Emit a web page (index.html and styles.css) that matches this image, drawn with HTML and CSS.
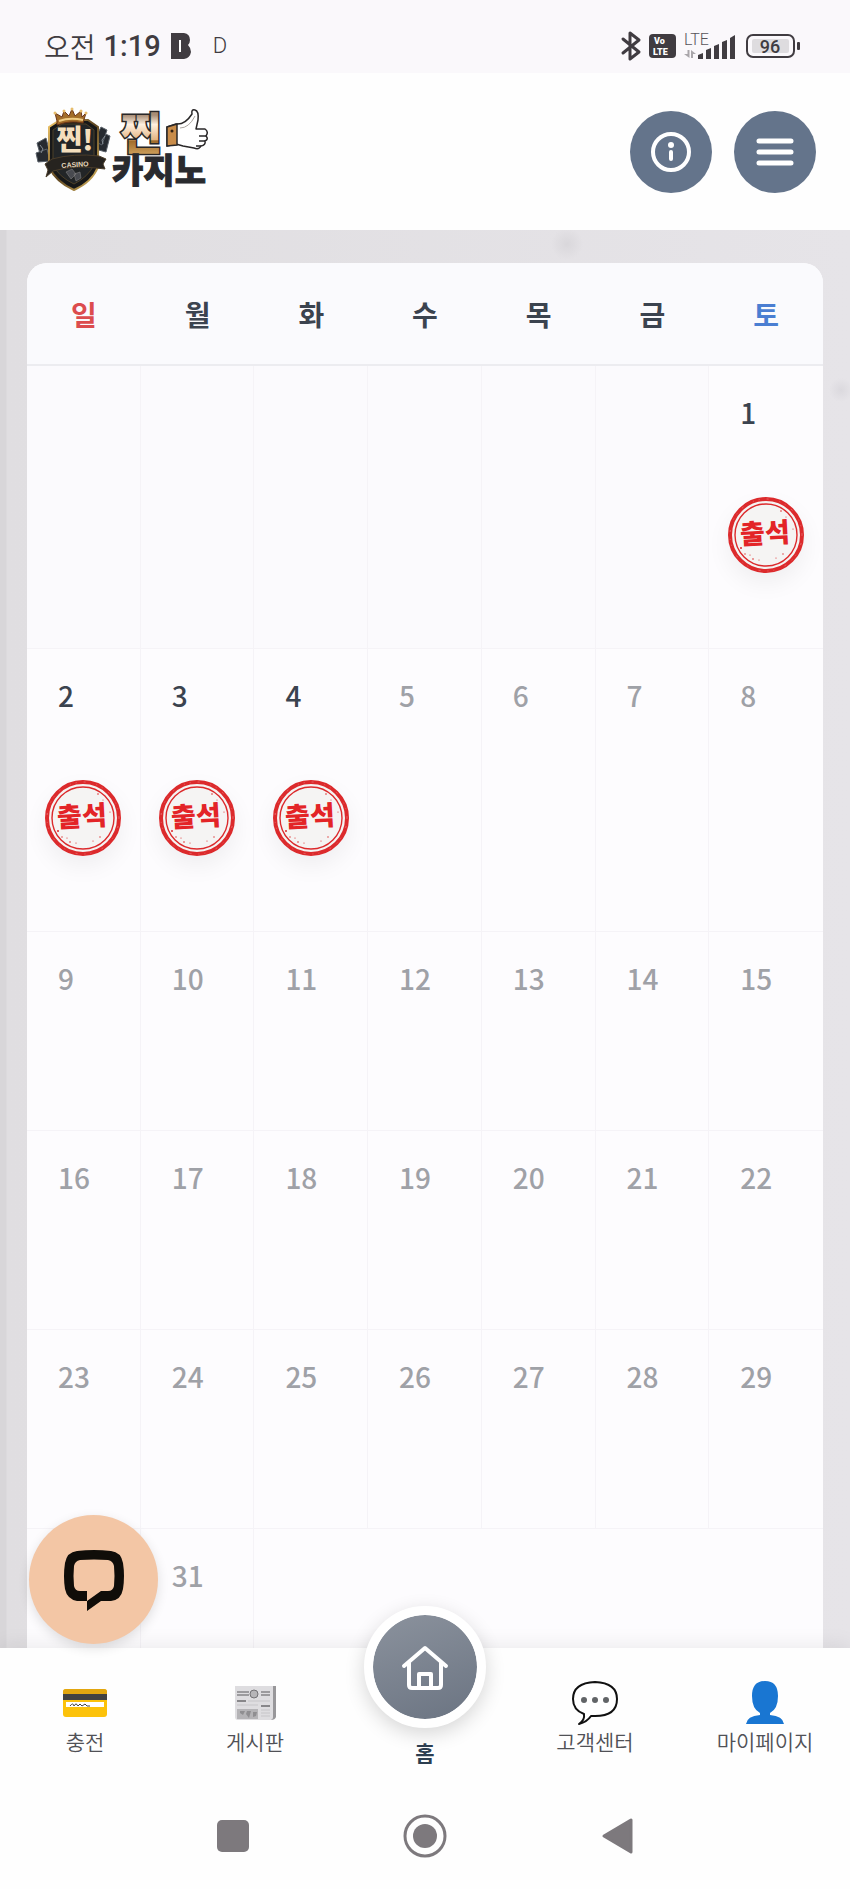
FILE: index.html
```html
<!DOCTYPE html>
<html lang="ko">

<head>
  <meta charset="UTF-8">
  <meta name="viewport" content="width=device-width, initial-scale=1.0">
  <title>찐카지노 - 출석체크</title>
  <link rel="stylesheet" href="styles.css">
</head>

<body>
  <!-- shared stamp drawing -->
  <svg class="defs" width="0" height="0" aria-hidden="true">
    <symbol id="stamp" viewBox="0 0 76 76">
      <circle cx="38" cy="38" r="36" fill="#f5f4f3" stroke="#dc2a2c" stroke-width="4" />
      <circle cx="38" cy="38" r="31" fill="none" stroke="#dc2a2c" stroke-width="1.4" />
      <circle cx="38" cy="38" r="36" fill="none" stroke="#e8686a" stroke-width="1" stroke-dasharray="1 7 2 11 1 5" />
      <g fill="#dc2a2c">
        <circle cx="13" cy="51" r="1" />
        <circle cx="17" cy="57" r=".7" />
        <circle cx="22" cy="58" r=".6" />
        <circle cx="25" cy="62" r=".8" />
        <circle cx="31" cy="63" r=".6" />
        <circle cx="48" cy="61" r=".6" />
        <circle cx="55" cy="57" r=".7" />
        <circle cx="53" cy="14" r=".8" />
        <circle cx="58" cy="20" r=".5" />
        <circle cx="65" cy="32" r=".6" />
      </g>
      <text x="37" y="46" text-anchor="middle" transform="rotate(-3 38 38)" class="stamp-text">출석</text>
    </symbol>
  </svg>

  <div class="app">
    <div class="status-bar">
      <div class="status-left">
        <span class="ampm">오전</span>
        <span class="clock">1:19</span>
        <svg class="status-b" width="20" height="26" viewBox="0 0 20 26">
          <path d="M0 0H13Q19 1 19 7Q19 10 17 12Q20 15 20 19Q19 25 13 26H0Z" fill="#403c41" />
          <path d="M9 7V19" stroke="#fff" stroke-width="2" />
        </svg>
        <span class="carrier">D</span>
      </div>
      <div class="status-right">
        <svg width="20" height="30" viewBox="0 0 20 30" fill="none" stroke="#403c41" stroke-width="3" stroke-linejoin="round" stroke-linecap="round">
          <path d="M2 8L18 21L9 28V2L18 9L2 22" />
        </svg>
        <svg width="27" height="24" viewBox="0 0 27 24">
          <rect width="27" height="24" rx="4" fill="#403c41" />
          <text x="5" y="10" class="volte">Vo</text>
          <text x="4" y="21" class="volte">LTE</text>
        </svg>
        <svg width="54" height="36" viewBox="0 0 54 36">
          <text x="0" y="17" class="lte">LTE</text>
          <g fill="#a9a6aa">
            <path d="M3.500 22H5.500V30L0 26H3.500Z" />
            <path d="M7 30V22L12 26H9V30Z" />
          </g>
          <g fill="#403c41">
            <path d="M14 27L19 25V31H14Z" />
            <path d="M22 22L27 20V31H22Z" />
            <path d="M30 18L35 16V31H30Z" />
            <path d="M38 14L43 12V31H38Z" />
            <path d="M46 10L51 7V31H46Z" />
          </g>
        </svg>
        <svg width="54" height="24" viewBox="0 0 54 24">
          <rect x="1" y="1" width="47" height="22" rx="6" fill="none" stroke="#403c41" stroke-width="2" />
          <rect x="6" y="5" width="37" height="14" rx="2" fill="#dedcdf" />
          <rect x="51" y="8" width="3" height="8" rx="1" fill="#403c41" />
          <text x="24" y="19" text-anchor="middle" class="battery">96</text>
        </svg>
      </div>
    </div>

    <header class="header">
      <a href="#" class="logo" aria-label="찐카지노">
        <svg width="180" height="90" viewBox="0 0 180 90">
          <defs>
            <linearGradient id="gold" gradientUnits="userSpaceOnUse" x1="0" y1="8" x2="0" y2="46">
              <stop offset="0" stop-color="#a88d76" />
              <stop offset=".25" stop-color="#fff0e0" />
              <stop offset=".65" stop-color="#e3b482" />
              <stop offset=".68" stop-color="#a06c2c" />
              <stop offset="1" stop-color="#c89955" />
            </linearGradient>
            <linearGradient id="rim" x1="0" y1="0" x2="1" y2="1">
              <stop offset="0" stop-color="#f3c869" />
              <stop offset=".5" stop-color="#5d4520" />
              <stop offset="1" stop-color="#e2bd63" />
            </linearGradient>
          </defs>
          <g fill="#262a30" stroke="#596068" stroke-width="1">
            <path d="M3 36L12 31L17 50L8 54Z" />
            <path d="M2 46L13 42L16 54L4 55Z" />
            <path d="M65 24L76 29L72 45L61 42Z" />
            <path d="M67 20L73 23L68 38L60 34Z" />
          </g>
          <path d="M6 38l3 4-2 4M71 29l-3 4 1 4" stroke="#858d94" fill="none" />
          <path d="M15 20L26 13H54L64 20V60Q58 75 40 83Q22 75 15 60Z" fill="#171819" stroke="url(#rim)" stroke-width="2" />
          <path d="M19 23L28 17H52L60 23V58Q54 70 40 77Q25 70 19 58Z" fill="#222527" stroke="#4d4028" stroke-width="1" />
          <path d="M23 14L21 6L28 10L30 4L35 9L38 2L41 9L47 4L48 10L52 6L49 16Q36 13 23 18Z" fill="#a26d29" stroke="#6c3519" />
          <path d="M25 14Q36 10 49 13" stroke="#efcc83" fill="none" stroke-width="2" />
          <g fill="#e7bd6b">
            <circle cx="21" cy="6" r="1.500" />
            <circle cx="30" cy="4" r="1.500" />
            <circle cx="38" cy="2" r="1.500" />
            <circle cx="47" cy="4" r="1.500" />
            <circle cx="52" cy="6" r="1.500" />
          </g>
          <text x="41" y="43" text-anchor="middle" class="logo-badge">찐!</text>
          <path d="M11 57L18 52Q40 46 65 49L72 52L69 57L71 62L62 61Q40 58 19 64L12 70L14 63Z" fill="#26231f" stroke="#4b3d2a" stroke-width="1" />
          <text x="41" y="60" text-anchor="middle" transform="rotate(-4 41 57)" class="logo-casino">CASINO</text>
          <g fill="#484a50" stroke="#8c8b8a" stroke-width=".5">
            <path d="M32 65l6-3 4 5-5 5zM40 67l6-2 1 6-5 3z" />
          </g>
          <text x="107" y="43" text-anchor="middle" class="logo-jjin">찐</text>
          <text x="125" y="76" text-anchor="middle" class="logo-name">카지노</text>
          <path d="M133 20L142 17Q151 18 158 7Q157 2 161 3Q165 4 164 13L162 22L171 22Q175 25 172 29Q175 32 171 34Q172 38 167 39Q165 43 160 41L149 39L142 37L133 39Z" fill="#fff" stroke="#292728" stroke-width="1.500" stroke-linejoin="round" />
          <path d="M133 20L143 17V38L133 39Z" fill="#c98c49" stroke="#292728" stroke-width="1.500" />
          <path d="M165 29H172M165 34H171M162 39H167" stroke="#292728" stroke-width="1.500" />
          <circle cx="138" cy="24" r="1.500" fill="#342213" />
          <path d="M146 21Q155 21 161 9" fill="none" stroke="#aaa49e" />
        </svg>
      </a>
      <div class="header-buttons">
        <button type="button" class="round-button" aria-label="안내">
          <svg width="42" height="42" viewBox="0 0 42 42" fill="none" stroke="#fff" stroke-width="4" stroke-linecap="round">
            <circle cx="21" cy="21" r="18" />
            <path d="M21 21V28" />
            <circle cx="21" cy="14" r="3" fill="#fff" stroke="none" />
          </svg>
        </button>
        <button type="button" class="round-button" aria-label="메뉴">
          <svg width="42" height="42" viewBox="0 0 42 42" fill="none" stroke="#fff" stroke-width="5" stroke-linecap="round">
            <path d="M5 10H37M5 21H37M5 32H37" />
          </svg>
        </button>
      </div>
    </header>

    <main class="content">
      <table class="calendar">
        <thead>
          <tr>
            <th class="sunday">일</th>
            <th>월</th>
            <th>화</th>
            <th>수</th>
            <th>목</th>
            <th>금</th>
            <th class="saturday">토</th>
          </tr>
        </thead>
        <tbody>
          <tr>
            <td class="empty"></td>
            <td class="empty"></td>
            <td class="empty"></td>
            <td class="empty"></td>
            <td class="empty"></td>
            <td class="empty"></td>
            <td class="checked"><span class="day">1</span><svg class="stamp"><use href="#stamp" /></svg></td>
          </tr>
          <tr>
            <td class="checked"><span class="day">2</span><svg class="stamp"><use href="#stamp" /></svg></td>
            <td class="checked"><span class="day">3</span><svg class="stamp"><use href="#stamp" /></svg></td>
            <td class="checked"><span class="day">4</span><svg class="stamp"><use href="#stamp" /></svg></td>
            <td><span class="day">5</span></td>
            <td><span class="day">6</span></td>
            <td><span class="day">7</span></td>
            <td><span class="day">8</span></td>
          </tr>
          <tr>
            <td><span class="day">9</span></td>
            <td><span class="day">10</span></td>
            <td><span class="day">11</span></td>
            <td><span class="day">12</span></td>
            <td><span class="day">13</span></td>
            <td><span class="day">14</span></td>
            <td><span class="day">15</span></td>
          </tr>
          <tr>
            <td><span class="day">16</span></td>
            <td><span class="day">17</span></td>
            <td><span class="day">18</span></td>
            <td><span class="day">19</span></td>
            <td><span class="day">20</span></td>
            <td><span class="day">21</span></td>
            <td><span class="day">22</span></td>
          </tr>
          <tr>
            <td><span class="day">23</span></td>
            <td><span class="day">24</span></td>
            <td><span class="day">25</span></td>
            <td><span class="day">26</span></td>
            <td><span class="day">27</span></td>
            <td><span class="day">28</span></td>
            <td><span class="day">29</span></td>
          </tr>
          <tr>
            <td></td>
            <td><span class="day">31</span></td>
            <td colspan="5"></td>
          </tr>
        </tbody>
      </table>
    </main>

    <nav class="bottom-nav">
      <button type="button" class="chat-button" aria-label="채팅 상담">
        <svg width="62" height="62" viewBox="0 0 62 62">
          <path fill="#100d09" fill-rule="evenodd" d="M14 2Q31 0 48 2Q58 3 60 14Q62 27 60 40Q58 51 48 52H38L24 62V52H14Q4 50 2 40Q0 27 2 14Q4 3 14 2ZM17 11Q12 12 11 17Q10 27 11 37Q12 42 17 42H24V52L38 42H45Q50 42 51 37Q52 27 51 17Q50 12 45 11Q31 10 17 11Z" />
        </svg>
      </button>
      <a href="#" class="nav-item">
        <svg width="46" height="44" viewBox="0 0 46 44">
          <rect x="1" y="8" width="44" height="28" rx="3" fill="#fcc20b" />
          <path d="M1 13V11Q1 8 4 8H42Q45 8 45 11V13Z" fill="#e2a610" />
          <rect x="1" y="13" width="44" height="6" fill="#424242" />
          <rect x="4" y="21" width="38" height="5" fill="#fff" />
          <path d="M8 25q3-4 4 0q2-4 4 0l2-2 2 2 3-2 2 2h3" fill="none" stroke="#424242" stroke-width="1" />
        </svg>
        <span>충전</span>
      </a>
      <a href="#" class="nav-item">
        <svg width="46" height="44" viewBox="0 0 46 44">
          <path d="M40 5H44V36Q43 39 39 39Z" fill="#98979a" />
          <path d="M3 5H41V36Q41 39 38 39H6Q3 39 3 36Z" fill="#dedde0" />
          <path d="M5 11H17M29 11H38M5 14H17M29 14H38" stroke="#9c9b9e" stroke-width="2" />
          <circle cx="22" cy="13" r="4" fill="#b6b5b8" stroke="#747376" />
          <path d="M5 20H14M29 25H38" stroke="#88878a" stroke-width="2" />
          <path d="M5 24H26M16 20H38M29 29H38M29 32H38M29 35H38" stroke="#c6c5c8" stroke-width="1" />
          <rect x="5" y="28" width="21" height="10" fill="#b4b3b6" />
          <path d="M8 30h5l-2 4-3-2M15 30h4l-2 7-3-4M21 31h4l-1 4-3 1" fill="#8f8e91" />
        </svg>
        <span>게시판</span>
      </a>
      <a href="#" class="nav-item nav-home">
        <span class="home-circle">
          <svg width="48" height="48" viewBox="0 0 48 48" fill="none" stroke="#fff" stroke-width="4" stroke-linecap="round" stroke-linejoin="round">
            <path d="M3 23L24 5L45 23" />
            <path d="M8 20V42Q8 45 11 45H37Q40 45 40 42V20" />
            <path d="M18 45V31H30V45" />
          </svg>
        </span>
        <span>홈</span>
      </a>
      <a href="#" class="nav-item">
        <svg width="46" height="44" viewBox="0 0 46 44">
          <path d="M23 1Q45 2 45 18Q45 35 23 35H19Q15 41 7 43Q13 39 12 33Q1 29 1 18Q1 2 23 1Z" fill="#fff" stroke="#111" stroke-width="2" stroke-linejoin="round" />
          <g fill="#616467">
            <circle cx="12" cy="19" r="3" />
            <circle cx="23" cy="19" r="3" />
            <circle cx="34" cy="19" r="3" />
          </g>
        </svg>
        <span>고객센터</span>
      </a>
      <a href="#" class="nav-item">
        <svg width="46" height="44" viewBox="0 0 46 44" fill="#1976d2">
          <path d="M23 0Q36 0 36 15Q36 28 28 32V34Q41 35 42 43H4Q5 35 18 34V32Q10 28 10 15Q10 0 23 0Z" />
        </svg>
        <span>마이페이지</span>
      </a>
    </nav>

    <div class="system-nav">
      <button type="button" aria-label="최근 앱">
        <svg width="44" height="44" viewBox="0 0 44 44"><rect x="6" y="6" width="32" height="32" rx="5" fill="#7d797d" /></svg>
      </button>
      <button type="button" aria-label="홈 화면">
        <svg width="44" height="44" viewBox="0 0 44 44">
          <circle cx="22" cy="22" r="20" fill="none" stroke="#7d797d" stroke-width="3" />
          <circle cx="22" cy="22" r="12" fill="#7d797d" />
        </svg>
      </button>
      <button type="button" aria-label="뒤로">
        <svg width="44" height="44" viewBox="0 0 44 44"><path d="M9 22L36 6V38Z" fill="#7d797d" stroke="#7d797d" stroke-width="3" stroke-linejoin="round" /></svg>
      </button>
    </div>
  </div>
</body>

</html>
```

FILE: styles.css
```css
* {
  margin: 0;
  padding: 0;
  box-sizing: border-box;
}

body {
  font-family: "Noto Sans CJK KR", "Noto Sans", sans-serif;
  color: #3b434f;
  background: #fefefe;
}

button {
  border: none;
  background: none;
  cursor: pointer;
}

svg {
  display: block;
  flex-shrink: 0;
  overflow: visible;
}

.defs {
  position: absolute;
}

.app {
  display: flex;
  flex-direction: column;
  height: 100vh;
}

/* phone status bar */

.status-bar {
  display: flex;
  align-items: center;
  justify-content: space-between;
  height: 73px;
  padding: 18px 50px 0 44px;
  background: #faf8fb;
  color: #403c41;
  flex-shrink: 0;
}

.status-left,
.status-right {
  display: flex;
  align-items: center;
}

.status-right {
  gap: 8px;
}

.ampm {
  font-size: 28px;
  font-weight: 350;
  line-height: 44px;
  margin-right: 8px;
}

.clock {
  font-family: Roboto, sans-serif;
  font-size: 29px;
  font-weight: 500;
  margin-right: 10px;
}

.status-b {
  margin-right: 22px;
}

.carrier {
  font-family: Roboto, sans-serif;
  font-size: 22px;
  font-weight: 300;
}

.volte {
  font: 900 9px Roboto, sans-serif;
  fill: #fff;
}

.lte {
  font: 300 16px Roboto, sans-serif;
  fill: #57545a;
}

.battery {
  font: 500 18px Roboto, sans-serif;
  fill: #403c41;
}

/* header */

.header {
  display: flex;
  align-items: center;
  justify-content: space-between;
  height: 157px;
  padding: 0 34px;
  background: #fefefe;
  flex-shrink: 0;
}

.logo-badge {
  font-size: 28px;
  font-weight: 900;
  fill: #f4dfbd;
}

.logo-casino {
  font: bold 7px "Liberation Sans", sans-serif;
  fill: #e5d8be;
}

.logo-jjin {
  font-size: 44px;
  font-weight: 900;
  fill: url(#gold);
  stroke: #292728;
  stroke-width: 3px;
  paint-order: stroke;
}

.logo-name {
  font-size: 34px;
  font-weight: 900;
  fill: #292a2e;
  stroke: #292a2e;
  stroke-width: 1px;
}

.header-buttons {
  display: flex;
  gap: 22px;
}

.round-button {
  display: flex;
  align-items: center;
  justify-content: center;
  width: 82px;
  height: 82px;
  border-radius: 50%;
  background: #64748b;
}

/* calendar */

.content {
  flex: 1;
  min-height: 0;
  padding: 33px 27px 0;
  overflow: hidden;
  background:
    radial-gradient(circle at 567px 14px, #d9d7db 0, transparent 16px),
    radial-gradient(circle at 841px 160px, #dbd9de 0, transparent 12px),
    linear-gradient(90deg, #d8d6d9 0, #d8d6d9 6px, #e0dee1 7px, #e6e4e8 100%);
}

.calendar {
  width: 100%;
  table-layout: fixed;
  border-collapse: separate;
  border-spacing: 0;
  border-radius: 20px 20px 0 0;
  background: #fdfcfe;
  overflow: hidden;
}

.calendar th {
  height: 103px;
  background: #fafafd;
  border-bottom: 2px solid #ececf0;
  font-size: 28px;
  font-weight: 700;
  line-height: 42px;
  text-align: center;
  vertical-align: middle;
}

.calendar .sunday {
  color: #dc4c4e;
}

.calendar .saturday {
  color: #4a7ed2;
}

.calendar td {
  height: 199px;
  padding: 25px 0 0;
  border-right: 1px solid #f5f3f7;
  border-bottom: 1px solid #f5f3f7;
  vertical-align: top;
  color: #9fa1a7;
}

.calendar td:last-child {
  border-right: none;
}

.calendar .empty {
  background: #fbfafd;
}

.calendar .checked {
  color: #3b434f;
}

.day {
  display: block;
  padding-left: 31px;
  font-size: 28px;
  font-weight: 500;
  line-height: 42px;
}

.stamp {
  width: 76px;
  height: 76px;
  margin: 64px auto 75px;
  border-radius: 50%;
  box-shadow: 0 10px 24px rgba(0, 0, 0, 0.06);
}

.stamp-text {
  font-size: 27px;
  font-weight: 900;
  fill: #e32427;
}

/* bottom navigation */

.bottom-nav {
  position: relative;
  display: flex;
  height: 148px;
  background: #fefefe;
  box-shadow: 0 -2px 20px rgba(0, 0, 0, 0.08);
  flex-shrink: 0;
}

.nav-item {
  flex: 1;
  display: flex;
  flex-direction: column;
  align-items: center;
  padding-top: 33px;
  color: #505156;
  font-size: 21px;
  font-weight: 350;
  line-height: 32px;
  text-decoration: none;
}

.nav-home {
  padding-top: 0;
  color: #2c3e50;
  font-weight: 700;
}

.home-circle {
  display: flex;
  align-items: center;
  justify-content: center;
  width: 122px;
  height: 122px;
  margin-top: -42px;
  margin-bottom: 8px;
  border: 9px solid #fff;
  border-radius: 50%;
  background: linear-gradient(160deg, #8b929d, #6b7482) padding-box, #fff;
  box-shadow: 0 6px 20px rgba(0, 0, 0, 0.16);
}

/* floats above the calendar */
.chat-button {
  position: absolute;
  left: 29px;
  bottom: 152px;
  display: flex;
  align-items: center;
  justify-content: center;
  width: 129px;
  height: 129px;
  border-radius: 50%;
  background: #f3c6a5;
  box-shadow: 0 4px 12px rgba(0, 0, 0, 0.12);
}

/* android buttons */

.system-nav {
  position: relative;
  display: flex;
  justify-content: center;
  gap: 148px;
  height: 93px;
  padding-top: 18px;
  background: #fefefe;
  flex-shrink: 0;
}

.system-nav button {
  width: 44px;
  height: 44px;
}
```
